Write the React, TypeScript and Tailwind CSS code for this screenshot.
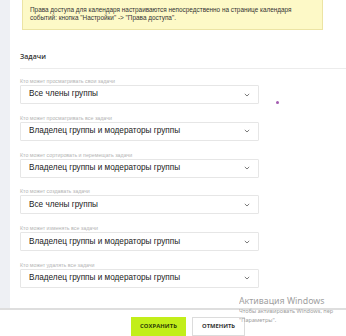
import React from "react";

const rows = [
  { label: "Кто может просматривать свои задачи", value: "Все члены группы" },
  { label: "Кто может просматривать все задачи", value: "Владелец группы и модераторы группы" },
  { label: "Кто может сортировать и перемещать задачи", value: "Владелец группы и модераторы группы" },
  { label: "Кто может создавать задачи", value: "Все члены группы" },
  { label: "Кто может изменять все задачи", value: "Владелец группы и модераторы группы" },
  { label: "Кто может удалять все задачи", value: "Владелец группы и модераторы группы" },
];

function Chevron() {
  return (
    <svg width="6" height="4" viewBox="0 0 6 4" className="text-[#7a7a7a]">
      <path d="M0.8 0.9 L3 3 L5.2 0.9" fill="none" stroke="currentColor" strokeWidth="1" />
    </svg>
  );
}

export default function App() {
  return (
    <div
      className="relative w-[346px] h-[336px] overflow-hidden bg-white flex flex-col"
      style={{ fontFamily: '"Open Sans", "Liberation Sans", Arial, sans-serif' }}
    >
      <div className="flex h-[308px] shrink-0">
        <div className="w-[10px] bg-[#eef0f4] shrink-0" />
        <div className="flex-1 bg-white pl-[10px] flex flex-col">
          <div className="ml-[2px] w-[301px] h-[30px] bg-[#fdf9c7] border border-t-0 border-[#ece4a4] pl-[7px] pt-[6px] text-[6.4px] leading-[8px] text-[#333]" style={{ fontFamily: '"Liberation Sans", Arial, sans-serif' }}>
            <div>Права доступа для календаря настраиваются непосредственно на странице календаря</div>
            <div>событий: кнопка "Настройки" -&gt; "Права доступа".</div>
          </div>
          <div className="mt-[22px] h-[10px] text-[7px] leading-[10px] font-semibold text-[#333]">Задачи</div>
          <div className="mt-[6px] h-px bg-[#ececec]" />
          <div className="mt-[9px] flex flex-col">
            {rows.map((r, i) => (
              <div key={i} className="h-[36.8px] flex flex-col">
                <div className="h-[7px] text-[5.3px] leading-[7px] text-[#b4b4b4]" style={{ fontFamily: '"Liberation Sans", Arial, sans-serif' }}>{r.label}</div>
                <div className="w-[239px] h-[19px] border border-[#e6e6e6] rounded-[1px] flex items-center justify-between pl-[8px] pr-[8px]">
                  <span className="text-[8.2px] text-[#222]" style={{ fontFamily: '"Liberation Sans", Arial, sans-serif' }}>{r.value}</span>
                  <Chevron />
                </div>
              </div>
            ))}
          </div>
        </div>
      </div>
      <div className="h-[2px] bg-[#dedede] shrink-0" />
      <div className="flex-1 flex items-start pl-[131px] pt-[7px] gap-[6px]">
        <button className="w-[55px] h-[19px] bg-[#c2ee1a] text-[5.8px] font-bold text-[#2c3a06] tracking-[0.1px]">
          СОХРАНИТЬ
        </button>
        <button className="w-[53px] h-[19px] bg-white border border-[#dcdcdc] text-[5.8px] font-bold text-[#333]">
          ОТМЕНИТЬ
        </button>
      </div>

      <div className="absolute left-[276px] top-[101px] w-[2.5px] h-[2.5px] rounded-full bg-[#a35bb0]" />

      <div className="absolute left-[239px] top-[295px] w-[107px] overflow-hidden text-[#a0a0a0] whitespace-nowrap pointer-events-none" style={{ fontFamily: '"Noto Sans", "Open Sans", sans-serif' }}>
        <div className="text-[8.8px] leading-[13px]">Активация Windows</div>
        <div className="text-[5.6px] leading-[9px] mt-[-1px]">Чтобы активировать Windows, пер</div>
        <div className="text-[5.6px] leading-[9px]">"Параметры".</div>
      </div>
    </div>
  );
}
